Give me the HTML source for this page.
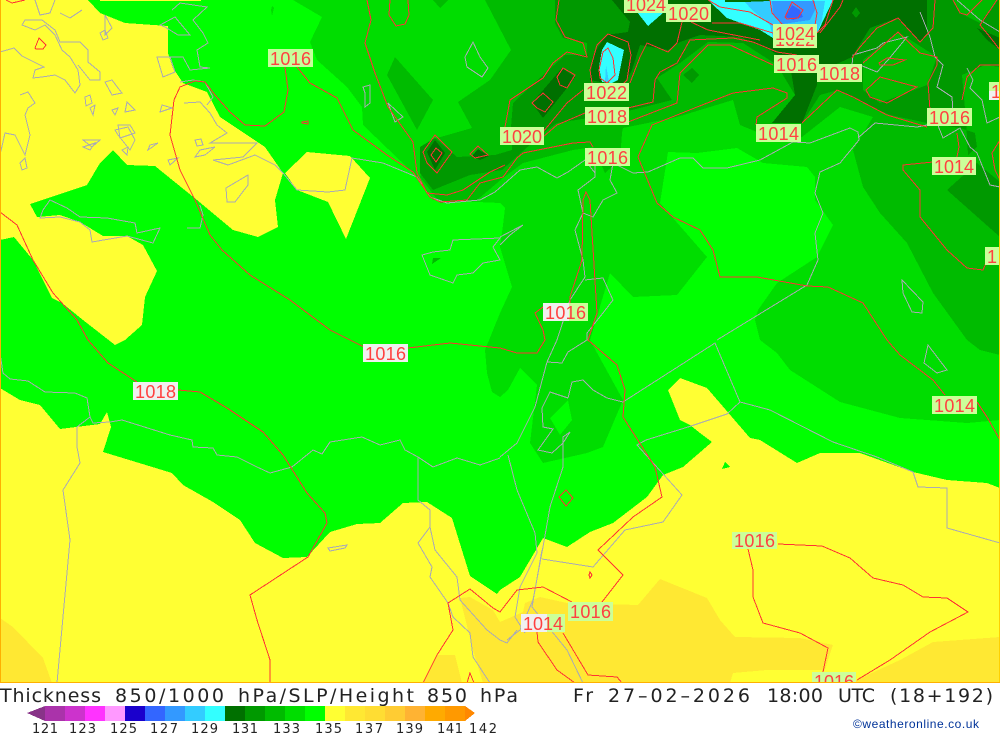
<!DOCTYPE html>
<html><head><meta charset="utf-8"><style>
html,body{margin:0;padding:0;background:#fff;width:1000px;height:733px;overflow:hidden}
svg{display:block}
.f polygon{shape-rendering:crispEdges}
.c polyline,.c polygon{fill:none;stroke:#aaaab4;stroke-width:1;shape-rendering:crispEdges}
.r polyline,.r polygon{fill:none;stroke:#ff3333;stroke-width:1;shape-rendering:crispEdges}
.l rect{shape-rendering:crispEdges}
.l text{font:18px "Liberation Sans",sans-serif;fill:#ff4040}
.t text{font-family:"DejaVu Sans",sans-serif;fill:#222}
</style></head><body>
<svg width="1000" height="733" viewBox="0 0 1000 733" xmlns="http://www.w3.org/2000/svg">
<defs><clipPath id="m"><rect x="0" y="0" width="1000" height="683"/></clipPath></defs>
<g clip-path="url(#m)">
<g class="f">
<rect x="0" y="0" width="1000" height="683" fill="#00ff00"/>
<g fill="#ffff33">
<rect x="100" y="0" width="101" height="1"/>
<polygon points="0,0 88,0 100,13 125,23 168,26 168,53 173,68 183,83 207,92 220,117 265,147 283,173 275,200 278,227 258,237 233,230 197,200 155,166 127,165 113,150 100,163 87,185 30,204 37,217 60,215 80,222 103,236 127,236 143,245 157,271 145,297 142,325 125,340 115,345 83,320 62,303 52,298 33,260 14,237 0,240"/>
<polygon points="307,152 350,156 370,178 346,239 328,202 297,190 285,173"/>
<polygon points="0,388 20,400 40,405 60,429 100,424 107,412 111,427 103,452 172,473 183,485 213,502 240,520 255,543 283,558 307,557 330,532 357,524 380,523 403,503 427,502 452,518 470,576 497,594 500,590 520,577 543,538 567,547 590,532 613,523 647,497 663,475 683,467 712,442 700,433 690,425 680,420 668,390 680,378 707,388 750,438 760,440 797,463 820,453 860,453 913,472 947,480 987,483 1000,488 1000,683 0,683"/>
</g>
<g fill="#ffe833">
<polygon points="460,598 470,597 493,610 500,622 523,612 525,603 540,597 567,603 638,605 660,579 707,598 720,620 735,637 800,638 833,645 828,660 825,670 767,670 733,673 730,683 483,683 473,650"/>
<polygon points="423,683 437,655 455,655 462,683"/>
<polygon points="850,683 900,660 933,642 1000,637 1000,683"/>
<polygon points="0,618 13,627 43,658 52,683 0,683"/>
</g>
<polygon fill="#00ff00" points="725,462 730,467 722,469"/>
<polygon fill="#00dd00" points="293,0 1000,0 1000,420 967,423 900,418 840,402 790,370 777,353 760,340 755,320 758,310 777,283 817,257 833,225 815,200 815,177 807,167 763,163 737,148 697,153 668,152 660,203 707,257 677,295 633,297 610,273 590,340 623,400 603,447 587,453 543,463 530,443 537,385 520,368 508,390 500,397 492,392 487,373 485,350 500,313 512,287 500,247 503,225 505,208 500,203 433,200 413,173 363,125 362,107 347,87 317,60 310,42 322,17"/>
<polygon fill="#00ff00" points="550,418 568,400 572,420 560,435"/>
<polygon fill="#00dd00" points="272,6 274,8 272,16 271,10"/>
<g fill="#00bb00">
<polygon points="387,75 395,57 433,100 417,130"/>
<polygon points="433,258 441,258 432,264"/>
<polygon points="433,0 440,8 448,0"/>
<polygon points="485,0 1000,0 1000,355 980,350 967,340 933,293 907,243 880,213 863,187 853,150 873,117 840,107 802,137 757,132 740,125 733,100 677,117 623,128 622,133 620,160 605,173 593,147 573,150 523,163 503,178 477,200 440,203 420,177 430,140 472,128 458,102 490,80 511,50"/>
</g>
<g fill="#009900">
<polygon points="555,0 1000,0 1000,67 985,65 962,75 966,120 968,155 977,147 975,133 960,128 940,125 927,123 890,115 863,103 838,90 820,95 802,123 772,123 795,95 777,65 743,43 708,42 680,63 657,78 672,100 620,113 557,123 543,133 502,170 470,175 433,190 420,173 420,147 435,138 457,157 495,155 512,150 511,127 513,103 530,87 565,55 587,55 587,43 563,38 555,23"/>
<polygon points="947,190 977,163 1000,182 1000,237"/>
<polygon points="683,75 692,68 699,75 692,83"/>
</g>
<g fill="#00bb00">
<polygon points="863,90 863,60 898,32 937,57 927,85 880,103"/>
<polygon points="953,0 960,13 980,23 997,0"/>
</g>
<g fill="#007000">
<polygon points="612,0 630,22 628,32 606,35 593,55 590,80 600,82 625,83 632,70 640,45 668,50 680,42 700,35 740,37 770,50 790,65 795,95 772,123 802,123 817,85 817,73 852,57 870,28 897,18 920,42 927,33 927,0"/>
<polygon points="532,103 562,68 575,77 567,88 543,118"/>
<polygon points="427,152 435,140 445,153 435,170"/>
<polygon points="472,156 478,149 489,156 480,160"/>
<polygon points="977,28 1000,38 1000,50 987,40"/>
</g>
<polygon fill="#009900" points="852,13 856,7 860,13 856,18"/>
<g>
<polygon fill="#33ffff" points="637,12 648,26 663,13"/>
<polygon fill="#33ffff" points="599,67 602,50 607,42 624,50 618,80 612,83 602,82"/>
<polygon fill="#33ccff" points="606,65 609,82 605,82"/>
<polygon fill="#33ffff" points="708,0 727,18 760,30 773,38 815,38 833,0"/>
<polygon fill="#007000" points="725,0 770,0 770,2 725,2"/>
<polygon fill="#33ccff" points="745,2 752,10 770,25 773,38 815,38 822,20 825,1 770,1"/>
<polygon fill="#3399ff" points="772,1 773,15 783,24 810,20 815,10 815,1"/>
<polygon fill="#3366ff" points="785,17 792,5 800,10 803,17 793,20"/>
</g>
</g>
<g class="c">
<polyline points="0,52 14,48 22,56 30,60 44,67 35,70 33,78 42,77 55,75 65,80 75,93 80,85 78,70 70,57 62,50 55,35 45,25 35,30 22,25 25,20 42,20 55,30 60,42 80,42 88,50 88,62 100,72 100,80 90,80 78,65"/>
<polyline points="35,0 40,15 50,13 55,0"/>
<polyline points="60,13 70,18 82,10"/>
<polyline points="20,95 28,92 35,103 28,108 25,115 30,135 25,155 15,135 5,133 0,155"/>
<polygon points="226,188 248,175 248,185 235,202 227,202"/>
<polyline points="184,103 200,102 210,113 217,125 227,133 210,143 257,143 243,157 213,160 228,165 255,155 275,165 283,173 297,190 328,192 345,190 352,158 383,163 417,177 430,197 447,203 480,200 495,192 520,170 537,167 557,178 568,172 585,160 595,173"/>
<polygon points="40,218 60,217 80,222 90,230 92,242 127,236 153,243 160,228 137,233 135,223 107,218 80,217 67,208 50,200 43,210"/>
<polygon points="422,255 430,275 453,283 457,275 473,273 483,263 500,260 493,247 500,238 453,240 450,250 433,252"/>
<polyline points="500,237 523,225 510,235 500,245"/>
<polyline points="613,163 633,173 648,172 680,158 693,158 703,168 727,168 760,160 793,142 810,143 850,128 858,132 859,140 840,163 820,172 815,193 823,213 815,233 818,260 807,285 717,340"/>
<polyline points="859,137 875,123 917,127 937,123 943,138 960,128 970,147 977,153 990,185 1000,187"/>
<polyline points="920,12 930,37 935,57 943,65 937,87 952,97 953,113"/>
<polygon points="852,65 860,65 877,72 888,60 907,37 883,43 877,48 853,55"/>
<polyline points="967,68 973,80 970,88 982,100 987,123 1000,117"/>
<polyline points="957,0 980,20 1000,32"/>
<polyline points="595,163 595,177 578,190 583,213 575,230 583,260 585,277 570,300 557,340 547,362 535,407 517,443 500,457"/>
<polyline points="613,163 610,180 617,193 603,200 593,217 583,213"/>
<polyline points="585,280 603,278 613,300 603,313 587,333 587,340 568,352 562,363 547,362"/>
<polyline points="568,398 572,382 583,380 593,390 607,398 623,402 715,343 740,402 770,410 833,442 877,457 913,472 918,487 947,488 947,528 1000,543"/>
<polyline points="740,402 727,414 688,427 646,440 637,445 682,495 663,522 625,530 593,567 542,559"/>
<polyline points="568,398 550,392 542,408 543,427 553,429 538,450 552,453 563,443 570,432 563,437 563,467 550,507 543,547 533,600 520,630 507,640"/>
<polyline points="508,455 517,490 535,533 537,553 520,587 515,617 525,633"/>
<polyline points="542,550 532,607 567,650 583,683"/>
<polyline points="418,457 418,500 430,510 430,527 435,550 457,577 460,600 487,630 500,640 507,643 517,630"/>
<polyline points="430,527 418,543 432,567 430,577 448,603 453,617 470,633 473,657 490,683"/>
<polyline points="0,353 3,373 10,379 28,381 45,392 75,393 87,398 90,417 77,427 77,447 80,463 63,490 70,540 57,683"/>
<polyline points="90,417 93,423 110,422 122,420 170,435 192,440 193,447 213,448 217,455 237,457 257,467 270,473 292,467 313,450 322,454 330,442 362,437 380,445 400,440 405,450 418,457 433,467 457,458 480,465 500,458"/>
<polyline points="172,10 180,3 207,7 193,20 203,33 208,43 197,50 200,67 210,68 190,70 183,57 170,57 175,72 163,77 157,57 170,57"/>
<polygon points="160,25 175,17 190,35 178,35 165,27"/>
<polyline points="180,82 193,80 205,82 213,97 207,105"/>
<polygon points="465,57 473,42 480,57 488,68 482,77 467,67"/>
<polygon points="363,87 370,85 370,103 365,107 365,93"/>
<polygon points="388,103 403,117 395,122"/>
<polygon points="902,280 923,302 922,313 912,312 903,293"/>
<polygon points="928,345 947,370 937,373 924,363"/>
<polygon points="328,548 347,545 345,548 330,551"/>
<polygon points="85,97 90,95 92,103 86,106"/>
<polygon points="100,33 105,30 108,38 103,40"/>
<polygon points="105,82 112,80 118,88 122,93 112,95"/>
<polygon points="118,125 130,125 135,133 120,138"/>
<polygon points="90,108 95,105 93,115"/>
<polygon points="112,110 118,108 115,115"/>
<polygon points="127,102 135,110 125,112"/>
<polygon points="115,130 128,127 135,140 130,150 118,135"/>
<polygon points="83,147 95,143 90,150"/>
<polygon points="20,163 25,158 27,168 22,170"/>
<polygon points="83,140 92,147 100,140"/>
<polygon points="150,145 158,143 148,150"/>
<polygon points="168,160 178,158 170,165"/>
<polygon points="195,140 201,139 203,145 197,146"/>
<polygon points="200,150 215,147 205,155 195,157"/>
<polygon points="162,105 172,108 160,112"/>
<polygon points="105,15 112,28 105,35"/>
<polygon points="122,150 128,147 127,155"/>
<polyline points="200,205 203,215 200,228 187,228"/>
</g>
<g class="r">
<polyline points="285,67 288,90 284,112 265,126 245,125 230,112 215,95 205,82 195,81 180,87 174,100 170,135 180,170 195,200 210,235 222,250 250,275 290,300 330,330 364,347"/>
<polyline points="408,348 450,343 500,348 517,353 537,353 545,340 543,330 535,313 543,307"/>
<polyline points="297,67 310,83 337,98 353,130 387,155 413,172 430,197 440,202 467,200 480,183 503,177 517,158 523,153 573,143 590,142 593,147"/>
<polyline points="367,0 371,20 365,43 375,73 388,107 413,142 417,173 427,193 447,195 463,190 490,172 505,165"/>
<polyline points="543,137 557,125 585,113"/>
<polyline points="559,0 556,20 565,37 583,43 587,57 567,52 553,63 543,78 510,100 505,127"/>
<polyline points="543,132 567,103 583,90"/>
<polyline points="628,108 653,102 655,80 660,72 677,63 690,40 733,38 753,42 777,52 797,55"/>
<polyline points="628,122 677,103 680,73 708,45 730,45 773,65"/>
<polyline points="802,123 837,90 853,97 887,115 927,127"/>
<polyline points="957,133 959,147 957,157"/>
<polyline points="756,125 757,117 787,98 787,93 773,88 733,93 697,107 652,125 638,157 657,203 673,217 700,230 713,250 720,277 757,277 807,286 828,287 863,303 887,340 900,355 933,380 945,395"/>
<polyline points="977,402 987,417 1000,440"/>
<polyline points="933,162 903,165 903,170 920,190 920,217 947,250 967,268 983,270 986,263"/>
<polygon points="532,103 543,93 553,102 545,112 537,108"/>
<polygon points="557,77 563,68 575,75 567,88 560,85"/>
<polyline points="592,83 590,70 597,45 608,34 628,42 631,55 627,80 615,92"/>
<polygon points="599,70 603,52 608,48 613,58 615,75 607,83 600,78"/>
<polygon points="423,152 435,135 452,152 437,173 427,163"/>
<polygon points="431,155 436,148 442,153 436,162"/>
<polygon points="470,154 478,146 488,155 475,158"/>
<polyline points="708,0 720,7 750,12 773,25"/>
<polyline points="712,23 740,23 763,30 773,33"/>
<polyline points="770,0 772,13 782,24"/>
<polyline points="815,25 817,13 813,0"/>
<polyline points="817,33 825,25 833,0"/>
<polyline points="820,33 840,7 843,0"/>
<polygon points="785,17 792,2 803,10 798,18 787,19"/>
<polyline points="682,22 677,43 668,52 647,43 640,57 630,83"/>
<polyline points="691,22 708,30 760,40"/>
<polyline points="852,58 860,47 877,28 898,18 920,42 933,28 935,0"/>
<polyline points="863,63 898,32 920,53 937,57 937,65 928,83 930,110"/>
<polygon points="879,63 887,58 905,60 893,65 880,65"/>
<polygon points="866,90 880,77 917,87 887,103 870,97"/>
<polyline points="962,100 967,77 980,65 1000,65"/>
<polyline points="953,0 960,13 967,15 982,0"/>
<polyline points="1000,50 990,37 980,25 997,0"/>
<polyline points="1000,140 992,153 995,170 1000,180"/>
<polyline points="6,0 12,3 25,0"/>
<polygon points="35,48 39,38 46,45 43,49 36,49"/>
<polygon points="302,122 308,121 308,124 302,123"/>
<polyline points="390,0 389,15 396,26 405,24 409,15 408,0"/>
<polyline points="0,212 17,225 33,260 53,293 77,320 88,340 108,363 137,382"/>
<polyline points="178,390 200,392 227,408 263,432 283,455 307,493 325,513 327,523 308,557 250,595 257,620 270,660 270,683"/>
<polyline points="423,683 437,655 453,630 448,603 470,589 493,608 500,612 517,590 543,587 572,602"/>
<polyline points="602,602 623,575 598,550 633,517 662,497 655,467 623,417 625,390 617,365 588,340 597,313 590,200 586,192 583,200 582,260 570,297 570,303"/>
<polyline points="537,632 538,642 557,670 575,683"/>
<polyline points="563,633 588,675 617,677 622,683"/>
<polyline points="467,683 470,673 474,683"/>
<polygon points="559,497 566,490 573,498 566,506"/>
<polygon points="590,572 592,575 590,578 589,575"/>
<polyline points="778,544 822,546 850,558 873,578 903,585 923,597 947,598 968,612 930,632 890,660 857,680"/>
<polyline points="748,549 753,570 753,597 763,623 800,633 828,648 823,672"/>
</g>
<g class="l">
<rect x="268" y="49" width="45" height="18" fill="#c6ff9c"/><text x="270" y="65" textLength="41">1016</text>
<rect x="624" y="-6" width="44" height="19" fill="#ccff99"/><text x="626" y="11" textLength="40">1024</text>
<rect x="666" y="4" width="45" height="18" fill="#ccff99"/><text x="668" y="20" textLength="41">1020</text>
<rect x="773" y="30" width="44" height="18" fill="#ccff99"/><text x="775" y="46" textLength="40">1022</text>
<rect x="773" y="24" width="44" height="18" fill="#ccff99"/><text x="775" y="40" textLength="40">1024</text>
<rect x="774" y="55" width="45" height="18" fill="#ccff99"/><text x="776" y="71" textLength="41">1016</text>
<rect x="817" y="64" width="45" height="18" fill="#ccff99"/><text x="819" y="80" textLength="41">1018</text>
<rect x="584" y="83" width="45" height="18" fill="#ccff99"/><text x="586" y="99" textLength="41">1022</text>
<rect x="585" y="107" width="44" height="18" fill="#ccff99"/><text x="587" y="123" textLength="40">1018</text>
<rect x="500" y="127" width="44" height="18" fill="#ccff99"/><text x="502" y="143" textLength="40">1020</text>
<rect x="585" y="148" width="45" height="18" fill="#ccff99"/><text x="587" y="164" textLength="41">1016</text>
<rect x="756" y="124" width="45" height="18" fill="#ccff99"/><text x="758" y="140" textLength="41">1014</text>
<rect x="927" y="108" width="45" height="18" fill="#ccff99"/><text x="929" y="124" textLength="41">1016</text>
<rect x="932" y="157" width="44" height="18" fill="#ccff99"/><text x="934" y="173" textLength="40">1014</text>
<rect x="989" y="82" width="11" height="18" fill="#ccff99"/><rect x="989" y="91" width="11" height="9" fill="#f0f0f0"/><text x="991" y="98">1</text>
<rect x="985" y="247" width="15" height="18" fill="#ccff99"/><text x="987" y="263">1</text>
<rect x="543" y="303" width="45" height="18" fill="#ccff99"/><rect x="543" y="303" width="26" height="18" fill="#f0f0f0"/><text x="545" y="319" textLength="41">1016</text>
<rect x="363" y="344" width="45" height="18" fill="#f0f0f0"/><text x="365" y="360" textLength="41">1016</text>
<rect x="133" y="382" width="45" height="18" fill="#f0f0f0"/><text x="135" y="398" textLength="41">1018</text>
<rect x="932" y="396" width="45" height="18" fill="#ccff99"/><text x="934" y="412" textLength="41">1014</text>
<rect x="732" y="532" width="45" height="17" fill="#ccff99"/><text x="734" y="547" textLength="41">1016</text>
<rect x="568" y="602" width="45" height="19" fill="#ccff99"/><text x="570" y="618" textLength="41">1016</text>
<rect x="521" y="614" width="44" height="18" fill="#ccff99"/><rect x="521" y="614" width="26" height="18" fill="#f0f0f0"/><text x="523" y="630" textLength="40">1014</text>
<rect x="812" y="672" width="44" height="18" fill="#ccff99"/><text x="814" y="688" textLength="40">1016</text>
</g>
<rect x="0" y="0" width="1" height="683" fill="#ffb000"/>
<rect x="999" y="0" width="1" height="683" fill="#ffd000"/>
<rect x="0" y="682" width="1000" height="1" fill="#ffb000"/>
</g>
<g class="t" font-size="19">
<text x="0" y="702" textLength="101">Thickness</text>
<text x="115" y="702" textLength="109">850/1000</text>
<text x="238" y="702" textLength="176">hPa/SLP/Height</text>
<text x="427" y="702" textLength="40">850</text>
<text x="480" y="702" textLength="38">hPa</text>
<text x="573" y="702" textLength="20">Fr</text>
<text x="608" y="702" textLength="142">27–02–2026</text>
<text x="767" y="702" textLength="56">18:00</text>
<text x="838" y="702" textLength="37">UTC</text>
<text x="890" y="702" textLength="103">(18+192)</text>
</g>
<g class="f" shape-rendering="crispEdges">
<polygon points="27,713 45,706 45,721" fill="#883388"/>
<rect x="45" y="706" width="20" height="15" fill="#aa33aa"/>
<rect x="65" y="706" width="20" height="15" fill="#cc33cc"/>
<rect x="85" y="706" width="20" height="15" fill="#ff33ff"/>
<rect x="105" y="706" width="20" height="15" fill="#ff99ff"/>
<rect x="125" y="706" width="20" height="15" fill="#1a00cc"/>
<rect x="145" y="706" width="20" height="15" fill="#3366ff"/>
<rect x="165" y="706" width="20" height="15" fill="#3399ff"/>
<rect x="185" y="706" width="20" height="15" fill="#33ccff"/>
<rect x="205" y="706" width="20" height="15" fill="#33ffff"/>
<rect x="225" y="706" width="20" height="15" fill="#007000"/>
<rect x="245" y="706" width="20" height="15" fill="#009900"/>
<rect x="265" y="706" width="20" height="15" fill="#00bb00"/>
<rect x="285" y="706" width="20" height="15" fill="#00dd00"/>
<rect x="305" y="706" width="20" height="15" fill="#00ff00"/>
<rect x="325" y="706" width="20" height="15" fill="#ffff33"/>
<rect x="345" y="706" width="20" height="15" fill="#ffe833"/>
<rect x="365" y="706" width="20" height="15" fill="#ffdd33"/>
<rect x="385" y="706" width="20" height="15" fill="#ffcc33"/>
<rect x="405" y="706" width="20" height="15" fill="#ffb333"/>
<rect x="425" y="706" width="20" height="15" fill="#ffaa00"/>
<rect x="445" y="706" width="20" height="15" fill="#ff9900"/>
<polygon points="465,706 475,713 465,721" fill="#ff8800"/>
</g>
<g class="t" font-size="13">
<text x="32" y="733" textLength="26">121</text>
<text x="69" y="733" textLength="27">123</text>
<text x="110" y="733" textLength="27">125</text>
<text x="150" y="733" textLength="28">127</text>
<text x="191" y="733" textLength="27">129</text>
<text x="232" y="733" textLength="26">131</text>
<text x="273" y="733" textLength="27">133</text>
<text x="315" y="733" textLength="27">135</text>
<text x="355" y="733" textLength="28">137</text>
<text x="396" y="733" textLength="27">139</text>
<text x="437" y="733" textLength="26">141</text>
<text x="469" y="733" textLength="28">142</text>
</g>
<text x="853" y="728" font-family="'Liberation Sans',sans-serif" font-size="12" fill="#003399" textLength="126">©weatheronline.co.uk</text>
</svg>
</body></html>
